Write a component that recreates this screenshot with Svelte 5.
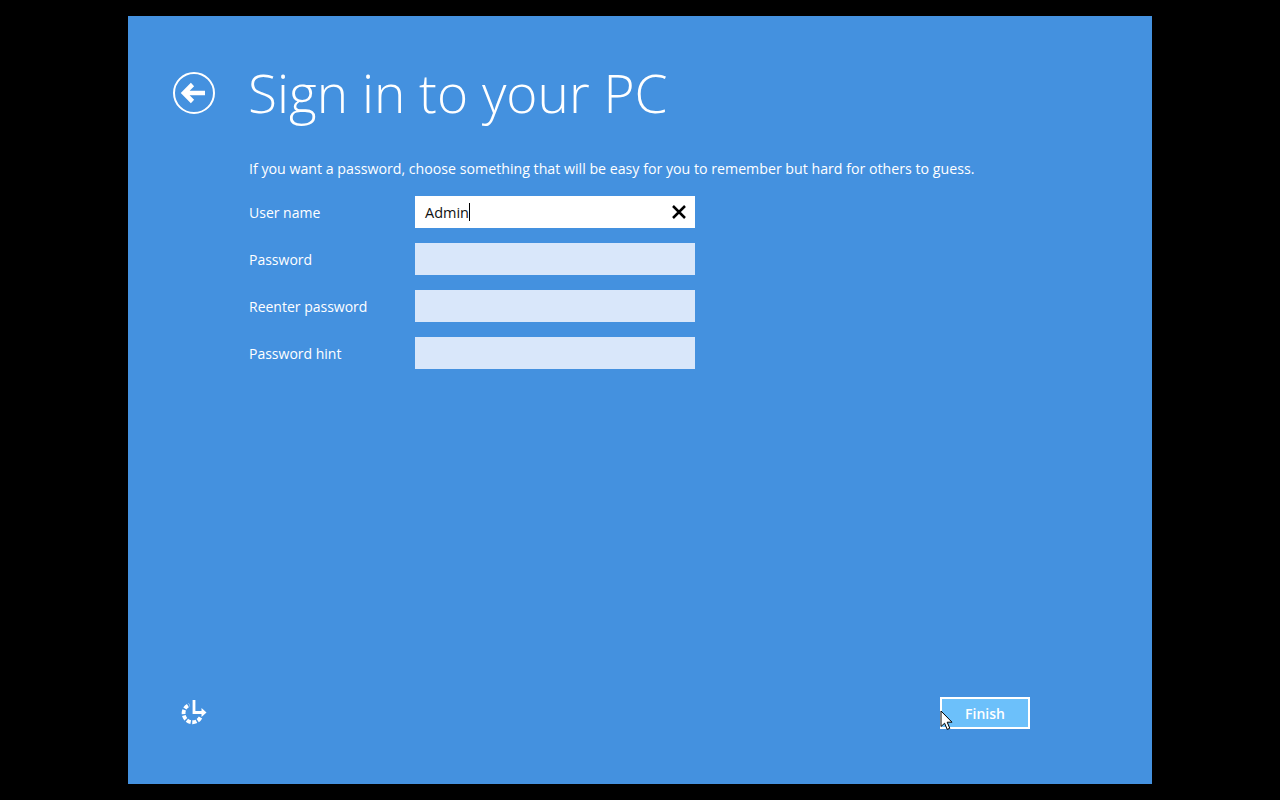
<script>
  const fields = [
    { label: 'User name', value: 'Admin', active: true },
    { label: 'Password', value: '' },
    { label: 'Reenter password', value: '' },
    { label: 'Password hint', value: '' }
  ];
</script>

<div class="page">
  <div class="screen">
    <header class="head">
      <button class="back" aria-label="Back">
        <svg width="44" height="44" viewBox="0 0 44 44">
          <circle cx="22" cy="22" r="20" fill="none" stroke="#fff" stroke-width="2" />
          <path d="M33 22 H13 M20.5 13.5 L12 22 L20.5 30.5" fill="none" stroke="#fff" stroke-width="4.6" />
        </svg>
      </button>
      <h1>Sign in to your PC</h1>
    </header>

    <main class="content">
      <p class="intro">If you want a password, choose something that will be easy for you to remember but hard for others to guess.</p>
      <div class="form">
        {#each fields as field}
          <div class="row">
            <span class="label">{field.label}</span>
            <div class="input" class:active={field.active}>
              {#if field.active}
                <span class="value">{field.value}</span><span class="caret"></span>
                <svg class="clear" width="14" height="14" viewBox="0 0 14 14">
                  <path d="M1 1 L13 13 M13 1 L1 13" stroke="#000" stroke-width="2.5" fill="none" />
                </svg>
              {/if}
            </div>
          </div>
        {/each}
      </div>
    </main>

    <footer class="foot">
      <svg class="access" width="28" height="26" viewBox="0 0 28 26">
        <path d="M20.5 17.5 A9 9 0 1 1 9.5 4.8" fill="none" stroke="#fff" stroke-width="3.8" stroke-dasharray="4.2 1.5" />
        <path d="M14 0 V12.5 H23" fill="none" stroke="#fff" stroke-width="2.8" />
        <path d="M21.5 8 L26.5 12.5 L21.5 17 Z" fill="#fff" />
      </svg>
      <div class="finish-wrap">
        <button class="finish">Finish</button>
        <svg class="cursor" width="14" height="21" viewBox="0 0 14 21">
          <path d="M1 1 V16.5 L4.6 13.2 L7.2 19.4 L9.8 18.3 L7.2 12.2 L12 12.2 Z" fill="#fff" stroke="#000" stroke-width="1" />
        </svg>
      </div>
    </footer>
  </div>
</div>

<style>
  :global(body) {
    margin: 0;
    background: #000;
  }

  .page {
    width: 1280px;
    height: 800px;
    display: flex;
    align-items: center;
    justify-content: center;
    background: #000;
    font-family: 'Open Sans', 'Noto Sans', sans-serif;
  }

  .screen {
    width: 1024px;
    height: 768px;
    box-sizing: border-box;
    padding: 47px 122px 55px 44px;
    background: #4491df;
    color: #fff;
    display: flex;
    flex-direction: column;
  }

  .head {
    display: flex;
    align-items: center;
    gap: 32px;
    height: 60px;
  }

  .back {
    width: 44px;
    height: 44px;
    padding: 0;
    border: 0;
    background: none;
    display: block;
  }

  h1 {
    margin: 0;
    font-size: 53.2px;
    font-weight: 300;
    line-height: 60px;
    white-space: nowrap;
  }

  .content {
    flex: 1;
    padding: 35px 0 0 77px;
  }

  .intro {
    margin: 0 0 16px;
    font-size: 14.2px;
    line-height: 22px;
    white-space: nowrap;
  }

  .form {
    display: flex;
    flex-direction: column;
    gap: 15px;
  }

  .row {
    display: flex;
    align-items: center;
    height: 32px;
  }

  .label {
    width: 166px;
    font-size: 14px;
  }

  .input {
    position: relative;
    width: 280px;
    height: 32px;
    box-sizing: border-box;
    padding-left: 10px;
    background: #d9e7fa;
    display: flex;
    align-items: center;
    color: #111;
    font-size: 14.5px;
  }

  .input.active {
    background: #fff;
  }

  .caret {
    width: 1px;
    height: 18px;
    background: #000;
  }

  .clear {
    position: absolute;
    right: 9px;
    top: 9px;
  }

  .foot {
    display: flex;
    align-items: center;
    justify-content: space-between;
    height: 32px;
  }

  .access {
    margin-left: 8px;
  }

  .finish-wrap {
    position: relative;
  }

  .finish {
    display: block;
    width: 90px;
    height: 32px;
    box-sizing: border-box;
    border: 2px solid #fff;
    background: #6cc0fa;
    color: #fff;
    font-family: inherit;
    font-size: 14px;
    font-weight: 600;
    padding: 0;
  }

  .cursor {
    position: absolute;
    left: 0;
    top: 13px;
  }
</style>
